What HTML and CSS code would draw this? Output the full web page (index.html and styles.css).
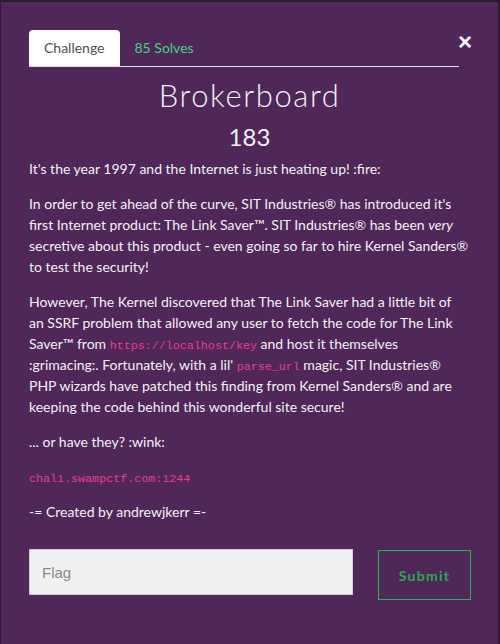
FILE: index.html
```html
<!DOCTYPE html>
<html>
<head>
<meta charset="utf-8">
<link rel="stylesheet" href="styles.css">
</head>
<body>
<div class="modal">
  <button class="close" aria-label="Close">×</button>
  <div class="content">
    <nav class="tabs">
      <span class="tab active">Challenge</span>
      <span class="tab solves">85 Solves</span>
    </nav>
    <h1 class="title">Brokerboard</h1>
    <div class="points">183</div>
    <div class="desc">
      <p>It's the year 1997 and the Internet is just heating up! :fire:</p>
      <p>In order to get ahead of the curve, SIT Industries® has introduced it's first Internet product: The Link Saver™. SIT Industries® has been <em>very</em> secretive about this product - even going so far to hire Kernel Sanders® to test the security!</p>
      <p>However, The Kernel discovered that The Link Saver had a little bit of an&nbsp;SSRF problem that allowed any user to fetch the code for The Link Saver™ from <code>https://localhost/key</code> and host it themselves :grimacing:. Fortunately, with a lil' <code>parse_url</code> magic, SIT Industries® PHP wizards have patched this finding from Kernel Sanders® and are keeping the code behind this wonderful site secure!</p>
      <p>... or have they? :wink:</p>
      <p><code>chal1.swampctf.com:1244</code></p>
      <p>-= Created by andrewjkerr =-</p>
    </div>
    <form class="flag-form">
      <input class="flag-input" type="text" placeholder="Flag">
      <button class="submit" type="button">Submit</button>
    </form>
  </div>
</div>
</body>
</html>
```
FILE: styles.css
```css
html, body {
  margin: 0;
  padding: 0;
  height: 100%;
}
body {
  background: #2a1c30;
  font-family: Lato, "Noto Sans", sans-serif;
  color: #f2f2f2;
}
.modal {
  position: relative;
  box-sizing: border-box;
  height: 642px;
  margin: 2px 2px 0 1px;
  background: #4f2759;
}
.close {
  position: absolute;
  top: 28px;
  right: 26px;
  background: none;
  border: 0;
  color: #fff;
  font-family: "Liberation Sans", Arial, sans-serif;
  font-size: 24px;
  font-weight: 700;
  line-height: 1;
  padding: 0;
  cursor: pointer;
}
.content {
  padding: 28px 28px 0 28px;
}
.tabs {
  display: flex;
  border-bottom: 1px solid #dee2e6;
  height: 36px;
  margin-right: 11px;
}
.tab {
  display: flex;
  align-items: center;
  padding: 0 15px;
  font-size: 14px;
  line-height: 20px;
}
.tab.active {
  background: #fff;
  color: #495057;
  border-radius: 4px 4px 0 0;
  height: 36px;
  box-sizing: border-box;
}
.tab.solves {
  color: #4ad07e;
}
.title {
  margin: 10px 0 0;
  text-align: center;
  font-weight: 300;
  font-size: 31px;
  line-height: 36px;
  letter-spacing: 1.6px;
}
.points {
  text-align: center;
  font-size: 24px;
  line-height: 30px;
  margin-top: 9px;
}
.desc {
  margin-top: 6px;
  font-size: 14px;
  line-height: 21px;
}
.desc p {
  margin: 0 0 14px;
}
code {
  font-family: "Liberation Mono", monospace;
  font-size: 11.7px;
  line-height: 1;
  color: #e83e8c;
}
.flag-form {
  display: flex;
  align-items: flex-start;
  margin-top: 27px;
}
.flag-input {
  flex: none;
  width: 324px;
  height: 46px;
  box-sizing: border-box;
  background: #f0f0f0;
  border: 1px solid #cfcfd2;
  padding: 0 12px;
  font-family: "Liberation Sans", Arial, sans-serif;
  font-size: 15px;
  color: #333;
}
.flag-input::placeholder {
  color: #858a90;
}
.submit {
  flex: none;
  margin-left: 25px;
  margin-top: 1px;
  width: 93px;
  height: 50px;
  background: transparent;
  border: 1px solid #2bb24c;
  color: #2ea84a;
  font-family: Lato, sans-serif;
  font-weight: 700;
  font-size: 14px;
  letter-spacing: 1.3px;
}
```
